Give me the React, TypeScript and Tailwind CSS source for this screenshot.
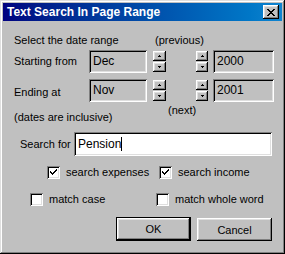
import React from "react";

const sunkenGray =
  "bg-[#c0c0c0] shadow-[inset_1px_1px_#808080,inset_-1px_-1px_#ffffff,inset_2px_2px_#000000,inset_-2px_-2px_#dfdfdf]";
const sunkenWhite =
  "bg-white shadow-[inset_1px_1px_#808080,inset_-1px_-1px_#ffffff,inset_2px_2px_#000000,inset_-2px_-2px_#dfdfdf]";
const raised =
  "bg-[#c0c0c0] shadow-[inset_-1px_-1px_#000000,inset_1px_1px_#ffffff,inset_-2px_-2px_#808080,inset_2px_2px_#dfdfdf]";

function Spin({ w }: { w: string }) {
  return (
    <div className={`flex flex-col gap-[1px] ${w}`}>
      <div className={`${raised} h-[10px] flex items-center justify-center`}>
        <svg width="3" height="2" viewBox="0 0 3 2">
          <path d="M1 0h1v1h1v1H0V1h1z" fill="#000" />
        </svg>
      </div>
      <div className={`${raised} h-[10px] flex items-center justify-center`}>
        <svg width="3" height="2" viewBox="0 0 3 2">
          <path d="M0 0h3v1H2v1H1V1H0z" fill="#000" />
        </svg>
      </div>
    </div>
  );
}

function Field({ value, w }: { value: string; w: string }) {
  return (
    <div className={`${sunkenGray} ${w} h-[23px] flex items-center pl-[4px] shrink-0`}>
      <span className="text-[12px]">{value}</span>
    </div>
  );
}

function Check({ checked, label, w }: { checked: boolean; label: string; w?: string }) {
  return (
    <div className={`flex items-center whitespace-nowrap ${w ?? ""}`}>
      <div className={`${sunkenWhite} w-[13px] h-[13px] flex items-center justify-center shrink-0`}>
        {checked && (
          <svg width="7" height="7" viewBox="0 0 7 7">
            <path d="M6 0h1v2H6v1H5v1H4v1H3v1H2V5H1V4H0V2h1v1h1v1h1V3h1V2h1V1h1z" fill="#000" />
          </svg>
        )}
      </div>
      <span className="ml-[6px]">{label}</span>
    </div>
  );
}

export default function App() {
  return (
    <div className="w-[285px] h-[254px] bg-[#c0c0c0] text-black text-[11px] leading-[14px] font-['Liberation_Sans',Arial,sans-serif] shadow-[inset_-1px_-1px_#000000,inset_1px_1px_#dfdfdf,inset_-2px_-2px_#808080,inset_2px_2px_#ffffff] pt-[3px] px-[3px] flex flex-col whitespace-nowrap">
      <div className="h-[18px] bg-gradient-to-r from-[#000080] to-[#1084d0] flex items-center justify-between pl-[4px] pr-[3px]">
        <span className="text-white font-bold text-[12px] leading-[16px]">Text Search In Page Range</span>
        <div className={`${raised} w-[16px] h-[14px] flex items-center justify-center`}>
          <svg width="8" height="7" viewBox="0 0 8 7">
            <path d="M0 0h2v1h1v1h2V1h1V0h2v1H7v1H6v1H5v1h1v1h1v1h1v1H6V6H5V5H3v1H2v1H0V6h1V5h1V4h1V3H2V2H1V1H0z" fill="#000" />
          </svg>
        </div>
      </div>

      <div className="pl-[11px] flex flex-col">
        <div className="mt-[12px] flex">
          <span className="w-[141px]">Select the date range</span>
          <span>(previous)</span>
        </div>

        <div className="mt-[2px] flex items-center h-[24px]">
          <span className="w-[75px] shrink-0">Starting from</span>
          <Field value="Dec" w="w-[58px]" />
          <div className="ml-[6px]"><Spin w="w-[13px]" /></div>
          <div className="ml-[30px]"><Spin w="w-[12px]" /></div>
          <div className="ml-[5px]"><Field value="2000" w="w-[61px]" /></div>
        </div>

        <div className="mt-[5px] flex items-center h-[24px]">
          <span className="w-[75px] shrink-0 mt-[3px]">Ending at</span>
          <Field value="Nov" w="w-[58px]" />
          <div className="ml-[6px]"><Spin w="w-[13px]" /></div>
          <div className="ml-[30px]"><Spin w="w-[12px]" /></div>
          <div className="ml-[5px]"><Field value="2001" w="w-[61px]" /></div>
        </div>

        <div className="flex h-[18px]">
          <span className="mt-[8px] w-[154px] shrink-0">(dates are inclusive)</span>
          <span className="mt-[1px]">(next)</span>
        </div>

        <div className="mt-[12px] flex items-center h-[24px] pl-[6px]">
          <span className="w-[54px] shrink-0">Search for</span>
          <div className={`${sunkenWhite} w-[198px] h-[24px] flex items-center pl-[4px] shrink-0`}>
            <span className="text-[12px]">Pension</span>
            <span className="w-[1px] h-[14px] bg-black" />
          </div>
        </div>

        <div className="mt-[9px] flex pl-[33px]">
          <Check checked label="search expenses" w="w-[112px]" />
          <Check checked label="search income" />
        </div>

        <div className="mt-[13px] flex pl-[16px]">
          <Check checked={false} label="match case" w="w-[126px]" />
          <Check checked={false} label="match whole word" />
        </div>

        <div className="mt-[11px] flex pl-[102px] gap-[6px]">
          <div className="w-[75px] h-[24px] bg-[#c0c0c0] shadow-[inset_-1px_-1px_#000000,inset_1px_1px_#000000,inset_-2px_-2px_#000000,inset_2px_2px_#ffffff,inset_-3px_-3px_#808080,inset_3px_3px_#dfdfdf] flex items-center justify-center">
            OK
          </div>
          <div className={`${raised} w-[75px] h-[23px] mt-[1px] flex items-center justify-center`}>
            Cancel
          </div>
        </div>
      </div>
    </div>
  );
}
